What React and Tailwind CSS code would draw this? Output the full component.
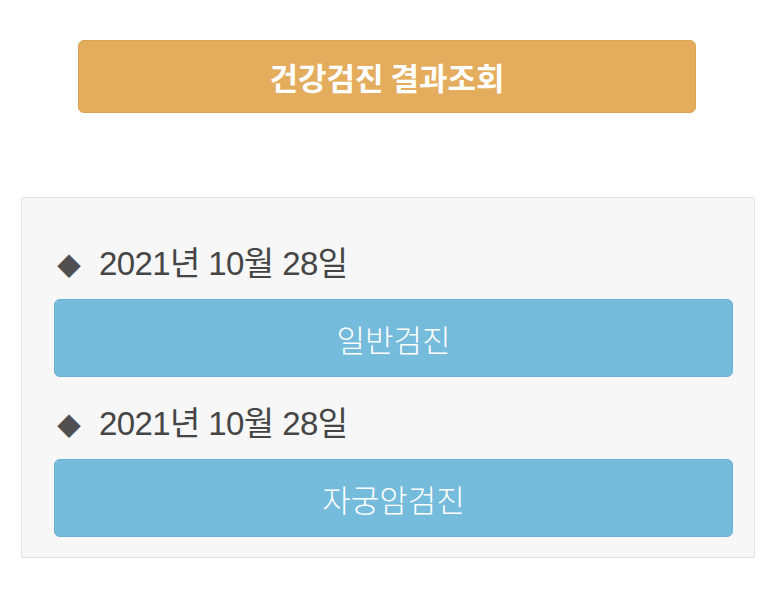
export default function App() {
  const ff = { fontFamily: '"Noto Sans CJK KR", "Noto Sans", sans-serif' };
  const df = { fontFamily: '"Liberation Sans", "Noto Sans CJK KR", sans-serif' };
  const items = [
    { date: "2021년 10월 28일", label: "일반검진" },
    { date: "2021년 10월 28일", label: "자궁암검진" },
  ];
  return (
    <div className="w-[773px] h-[598px] bg-white" style={ff}>
      <div className="pt-[40px] pl-[78px] pr-[77px]">
        <div className="h-[73px] rounded-[6px] bg-[#e4ad5d] border border-[#dba453] flex items-center justify-center text-white font-bold text-[31px] leading-none">
          건강검진 결과조회
        </div>
      </div>
      <div className="mt-[84px] ml-[21px] mr-[18px] bg-[#f7f7f7] border border-[#e0e0e0] rounded-[2px] pl-[32px] pr-[21px] pt-[47px] pb-[20px] flex flex-col">
        {items.map((it, i) => (
          <div key={i} className={i > 0 ? "mt-[28px]" : ""}>
            <div className="h-[40px] flex items-center text-[#454545]">
              <span className="text-[#505050] text-[24px] w-[45px] pl-[3px] leading-none" style={ff}>◆</span>
              <span className="leading-none text-[33px] tracking-[-0.6px] -mt-[4px]" style={df}>{it.date}</span>
            </div>
            <div className="mt-[14px] h-[78px] rounded-[6px] bg-[#75bbdc] border border-[#6cb2d4] flex items-center justify-center text-white text-[31px] font-light leading-none">
              {it.label}
            </div>
          </div>
        ))}
      </div>
    </div>
  );
}
